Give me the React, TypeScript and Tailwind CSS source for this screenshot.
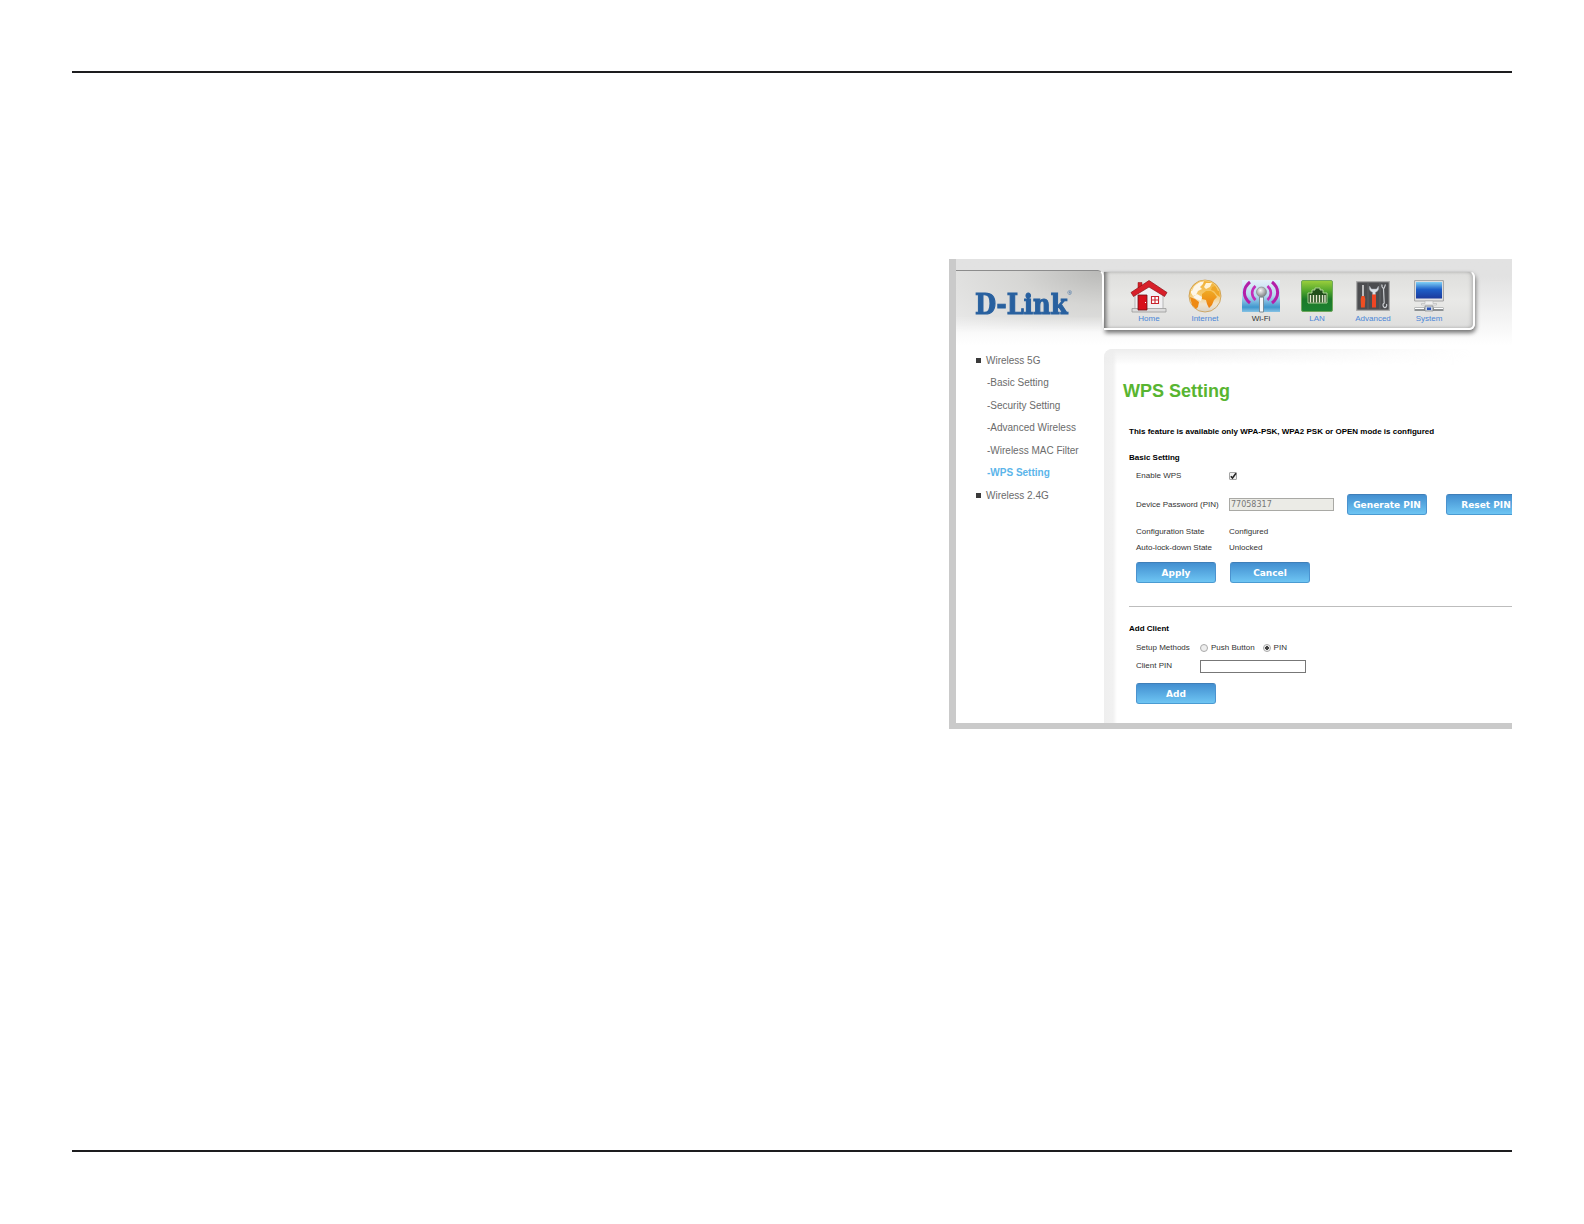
import type { ReactNode } from "react";

function HomeIcon() {
  return (
    <svg viewBox="0 0 38 34" className="h-[34px] w-[38px]" aria-hidden="true">
      <path d="M5 15 19 4 33 15V31H5Z" fill="#f1f1f3" stroke="#aaa" strokeWidth=".8" />
      <path d="M2 29.500H36V33H2Z" fill="#dcdcdc" stroke="#9a9a9a" strokeWidth=".8" />
      <path d="M8 3.500h4V9H8Z" fill="#d61f26" stroke="#8c1016" strokeWidth=".5" />
      <path d="M19 1.500 37 13.500 34.500 17.500 19 8 3.500 17.500 1 13.500Z" fill="#d8202a" stroke="#8c1219" strokeWidth=".7" />
      <path d="M8 16h9V31H8Z" fill="#d8101c" stroke="#6d1116" strokeWidth=".8" />
      <path d="M15 23.500h1" stroke="#fff" />
      <path d="M21.500 17.500h7v7h-7ZM25 17.500v7M21.500 21h7" fill="#fff" stroke="#c8232c" strokeWidth="1.100" />
    </svg>
  );
}

function GlobeIcon() {
  return (
    <svg viewBox="0 0 34 34" className="size-[34px]" aria-hidden="true">
      <defs>
        <linearGradient id="sea" x1="0" y1="0" x2="0" y2="1">
          <stop offset="0" stopColor="#f0ad2e" />
          <stop offset=".45" stopColor="#f6c96c" />
          <stop offset=".75" stopColor="#efe4d0" />
          <stop offset="1" stopColor="#d8d2c6" />
        </linearGradient>
        <linearGradient id="land" x1="0" y1="0" x2="0" y2="1">
          <stop offset="0" stopColor="#efaa24" />
          <stop offset="1" stopColor="#ee7d0c" />
        </linearGradient>
      </defs>
      <circle cx="17" cy="17" r="16" fill="url(#sea)" stroke="#c99a4c" strokeWidth=".8" />
      <path d="M6 7 11 3 16 2 15 5 12 8 14 10 10 12 8 16 5 17 3 14 3 11Z" fill="#fdf6e8" />
      <path d="M18 4 24 4 22 8 18 10 16 8Z" fill="#fff3d8" />
      <path d="M2 18 7 20 11 23 10 28 8 30 4 26Z" fill="#ee8a14" />
      <path d="M9 15 14 18 13 22 8 20 5 18Z" fill="#fbf6ec" />
      <path d="M14 15 18 12 23 12 26 14 29 18 26 21 24 26 21 29 19 25 18 21 14 20Z" fill="url(#land)" />
      <path d="M27 7 31 12 32 18 29 16 26 12 23 11 24 8Z" fill="#efa728" />
      <path d="M3.500 12A14 14 0 0 1 30.500 12" fill="none" stroke="#f9cf78" strokeWidth="1" />
    </svg>
  );
}

function WifiIcon() {
  return (
    <svg viewBox="0 0 38 34" className="h-[34px] w-[38px]" aria-hidden="true">
      <defs>
        <linearGradient id="sky" x1="0" y1="0" x2="0" y2="1">
          <stop offset="0" stopColor="#e4f0f8" />
          <stop offset=".5" stopColor="#b5d8ee" />
          <stop offset=".85" stopColor="#3f97ce" />
          <stop offset="1" stopColor="#86c2e4" />
        </linearGradient>
        <radialGradient id="ball" cx=".4" cy=".35" r=".7">
          <stop offset="0" stopColor="#f8f8f8" />
          <stop offset="1" stopColor="#75797c" />
        </radialGradient>
      </defs>
      <path d="M0 1H38V33H0Z" fill="url(#sky)" />
      <path d="M8 3C.500 9 .500 18 8 24M30 3C37.500 9 37.500 18 30 24" fill="none" stroke="#b31fa9" strokeWidth="3" />
      <path d="M13.500 7C9 11 9 17 13.500 21M25.500 7C30 11 30 17 25.500 21" fill="none" stroke="#c22eb7" strokeWidth="2.600" />
      <path d="M17.500 18h4V33h-4Z" fill="#f4f7f9" stroke="#738490" strokeWidth=".9" />
      <circle cx="19.500" cy="13" r="5" fill="url(#ball)" stroke="#7e8285" strokeWidth=".6" />
    </svg>
  );
}

function LanIcon() {
  return (
    <svg viewBox="0 0 32 32" className="size-8" aria-hidden="true">
      <defs>
        <linearGradient id="jack" x1="0" y1="0" x2="0" y2="1">
          <stop offset="0" stopColor="#9ccf3c" />
          <stop offset=".35" stopColor="#4fa52c" />
          <stop offset=".6" stopColor="#1c7a28" />
          <stop offset="1" stopColor="#1d8232" />
        </linearGradient>
      </defs>
      <rect x=".5" y=".5" width="31" height="31" rx="1.500" fill="url(#jack)" stroke="#6fa75c" />
      <path d="M7 23V13h4v-3h3V8h5v2h3v3h4V23Z" fill="#214f1b" stroke="#b9dba0" strokeWidth=".9" />
      <path d="M9.500 15v7.500M12.500 15v7.500M15.500 15v7.500M18.500 15v7.500M21.500 15v7.500M24 15v7.500" stroke="#e3e6cf" strokeWidth="1.400" />
    </svg>
  );
}

function ToolsIcon() {
  return (
    <svg viewBox="0 0 34 30" className="h-[30px] w-[34px]" aria-hidden="true">
      <rect x=".7" y=".7" width="32.600" height="28.600" fill="#4c4d50" stroke="#aaa" strokeWidth="1.200" />
      <path d="M12 1v28M24 1v28" stroke="#696a6d" strokeWidth=".7" />
      <path d="M7 4v12" stroke="#e2e2e2" strokeWidth="1.500" />
      <path d="M5.500 15h3l.8 3-.5 8.500H5L4.700 18Z" fill="#ee4e22" />
      <path d="M13.500 5c-.8 3 .5 5.500 3 6.300V14h3v-2.700c2.500-.8 3.800-3.300 3-6.300l-2 3h-5Z" fill="#dce1e6" stroke="#979ba0" strokeWidth=".5" />
      <path d="M16 13.500h4V26.500h-4Z" fill="#ee4524" />
      <path d="M26 3.500c-.5 2 0 3 1.500 4L28.200 22c-1.500 1-1.800 3 0 4.500 2 .3 3-1.500 2.300-3.500" fill="none" stroke="#c9ccd0" strokeWidth="1.200" />
      <path d="M29.500 3.500 28 7.500" stroke="#c9ccd0" strokeWidth="1.200" />
    </svg>
  );
}

function SystemIcon() {
  return (
    <svg viewBox="0 0 30 32" className="h-8 w-[30px]" aria-hidden="true">
      <defs>
        <linearGradient id="screen" x1="0" y1="0" x2="0" y2="1">
          <stop offset="0" stopColor="#7fd0f6" />
          <stop offset=".45" stopColor="#1d5fc8" />
          <stop offset="1" stopColor="#1b3a9c" />
        </linearGradient>
      </defs>
      <path d="M.6 .6H29.400V21H.6Z" fill="#e4e4e4" stroke="#a2a2a2" />
      <path d="M2 2h26V18.500h-26Z" fill="url(#screen)" />
      <path d="M11 21h8v2.500h3.500V25H7.500V23.500H11Z" fill="#f0f0f0" stroke="#b4b4b4" strokeWidth=".6" />
      <path d="M.5 27.500H29.500V31H.5Z" fill="#8d9193" />
      <path d="M1 28.500h9M20 28.500h9" stroke="#fff" strokeWidth="1.200" />
      <path d="M11 26h8v5h-8Z" fill="#cbd5e2" stroke="#777" strokeWidth=".6" />
      <path d="M13 27.500h4v2.500h-4Z" fill="#2a52b8" />
    </svg>
  );
}

const tabs: { label: string; icon: ReactNode; current?: boolean }[] = [
  { label: "Home", icon: <HomeIcon /> },
  { label: "Internet", icon: <GlobeIcon /> },
  { label: "Wi-Fi", icon: <WifiIcon />, current: true },
  { label: "LAN", icon: <LanIcon /> },
  { label: "Advanced", icon: <ToolsIcon /> },
  { label: "System", icon: <SystemIcon /> },
];

const menu: { label: string; level: 1 | 2; current?: boolean }[] = [
  { label: "Wireless 5G", level: 1 },
  { label: "-Basic Setting", level: 2 },
  { label: "-Security Setting", level: 2 },
  { label: "-Advanced Wireless", level: 2 },
  { label: "-Wireless MAC Filter", level: 2 },
  { label: "-WPS Setting", level: 2, current: true },
  { label: "Wireless 2.4G", level: 1 },
];

function ActionButton({ children }: { children: ReactNode }) {
  return (
    <button
      type="button"
      className="h-[21px] w-20 shrink-0 rounded-[3px] border border-t-[#3f7fb8] border-r-[#4b93cf] border-b-[#4a9bd2] border-l-[#4b93cf] bg-linear-to-b from-[#438fd0] to-[#6ec5f3] text-center font-['DejaVu_Sans',sans-serif] text-[9px] leading-4 font-bold whitespace-nowrap text-white"
    >
      {children}
    </button>
  );
}

function Header() {
  return (
    <header className="flex h-[86px] items-start bg-linear-to-b from-[#e2e2e2] from-20% to-white pt-[11px]">
      <a
        href="#home"
        className="flex h-[62px] w-[148px] shrink-0 items-center rounded-tr-md border-t border-r-2 border-t-[#8c8c8c] border-r-white bg-[radial-gradient(ellipse_at_top_right,#b9b9b7_0%,#d6d6d4_40%,#ebebeb_100%)] mask-[linear-gradient(to_bottom,black_75%,transparent)] pt-[6px] pl-[19px] font-['DejaVu_Serif_Condensed','DejaVu_Serif',serif] text-[27px] leading-8 font-bold whitespace-nowrap text-[#28609f] [-webkit-text-stroke:1px_#28609f]"
      >
        D-Link
        <span className="self-start font-['Liberation_Sans',sans-serif] text-[6px] font-normal [-webkit-text-stroke:0px]">®</span>
      </a>
      <nav
        aria-label="Main"
        className="mt-px flex h-[59px] w-[371px] shrink-0 rounded-r-md border-t border-r-2 border-b-2 border-t-[#cfcfcf] border-r-white border-b-white bg-linear-to-b from-[#dededc] via-[#e9e9e7] to-[#dededd] pl-[17px] shadow-[1px_3px_4px_#777,inset_4px_0_4px_-2px_#666,inset_-3px_0_4px_-2px_#aaa]"
      >
        {tabs.map((tab) => (
          <a
            key={tab.label}
            href={"#" + tab.label.toLowerCase()}
            aria-current={tab.current ? "page" : undefined}
            className={
              "flex w-14 flex-col items-center pt-[7px] text-[8px] leading-3 " +
              (tab.current ? "text-[#333]" : "text-[#4a86d8]")
            }
          >
            <span className="flex h-[34px] items-center">{tab.icon}</span>
            {tab.label}
          </a>
        ))}
      </nav>
    </header>
  );
}

function SideMenu() {
  return (
    <nav aria-label="Wi-Fi" className="w-[148px] shrink-0 pt-[4px] pl-5">
      <ul className="flex h-[157px] flex-col justify-between">
        {menu.map((item) => (
          <li
            key={item.label}
            className={"flex h-[22px] items-center text-[10px] " + (item.level === 1 ? "gap-[5px]" : "pl-[11px]")}
          >
            {item.level === 1 && <span className="size-[5px] bg-[#3a3a3a]" />}
            <a
              href={"#" + item.label}
              className={item.current ? "font-bold text-[#5bb5ea]" : "text-[#6b6b6b]"}
            >
              {item.label}
            </a>
          </li>
        ))}
      </ul>
    </nav>
  );
}

function WpsSettings() {
  return (
    <main className="relative min-w-0 flex-1 overflow-hidden pt-8 pl-[19px] text-[8px] leading-4 text-[#333]">
      <div className="absolute inset-x-0 top-[4px] bottom-0 rounded-tl-lg bg-[linear-gradient(to_right,#efefef_0,#f1f1f1_9px,white_13px)]" />
      <div className="absolute top-[4px] right-10 left-0 h-4 rounded-tl-lg bg-linear-to-b from-[#ededed] to-transparent mask-[linear-gradient(to_right,black_20%,transparent)]" />
      <form className="relative" onSubmit={(e) => e.preventDefault()}>
        <h1 className="text-[18px] leading-7 font-bold text-[#58b531]">WPS Setting</h1>
        <div className="pt-[19px] pl-[6px]">
          <p className="font-bold whitespace-nowrap text-black">
            This feature is available only WPA-PSK, WPA2 PSK or OPEN mode is configured
          </p>
          <h2 className="mt-[10px] font-bold text-black">Basic Setting</h2>
          <div className="pl-[7px]">
            <div className="mt-[2px] flex items-center">
              <label htmlFor="enable-wps" className="w-[93px] shrink-0">Enable WPS</label>
              <input
                id="enable-wps"
                type="checkbox"
                defaultChecked
                className="peer size-[8px] appearance-none rounded-[1px] border border-[#a5a5a5] bg-[#f0f0f0]"
              />
              <svg viewBox="0 0 8 8" className="pointer-events-none -ml-[8px] hidden size-[8px] overflow-visible peer-checked:block" aria-hidden="true">
                <path d="M1.800 4.200 3.500 6 7 1.200" fill="none" stroke="#222" strokeWidth="1.500" />
              </svg>
            </div>
            <div className="mt-[10px] flex items-center">
              <label htmlFor="device-pin" className="w-[93px] shrink-0">Device Password (PIN)</label>
              <input
                id="device-pin"
                type="text"
                defaultValue="77058317"
                readOnly
                className="mr-[13px] h-[13px] w-[105px] shrink-0 border border-[#a9a9a5] bg-[#ebebe6] px-px font-['DejaVu_Sans',sans-serif] text-[8px] text-[#777]"
              />
              <ActionButton>Generate PIN</ActionButton>
              <span className="w-[19px] shrink-0" />
              <ActionButton>Reset PIN</ActionButton>
            </div>
            <dl className="mt-[9px]">
              <div className="flex">
                <dt className="w-[93px]">Configuration State</dt>
                <dd>Configured</dd>
              </div>
              <div className="flex">
                <dt className="w-[93px]">Auto-lock-down State</dt>
                <dd>Unlocked</dd>
              </div>
            </dl>
            <div className="mt-[6px] flex gap-[14px]">
              <ActionButton>Apply</ActionButton>
              <ActionButton>Cancel</ActionButton>
            </div>
          </div>
          <hr className="mt-[23px] border-[#bdbdbd]" />
          <h2 className="mt-[14px] font-bold text-black">Add Client</h2>
          <div className="pl-[7px]">
            <fieldset className="mt-[3px] flex items-center">
              <span id="setup-methods" className="w-16 shrink-0">Setup Methods</span>
              <div role="radiogroup" aria-labelledby="setup-methods" className="flex gap-[8px]">
                <label className="flex items-center gap-[3px]">
                  <input
                    type="radio"
                    name="method"
                    className="size-[8px] appearance-none rounded-full border border-[#aaa] bg-[#eee] checked:bg-[radial-gradient(circle,#444_40%,#eee_50%)]"
                  />
                  Push Button
                </label>
                <label className="flex items-center gap-[3px]">
                  <input
                    type="radio"
                    name="method"
                    defaultChecked
                    className="size-[8px] appearance-none rounded-full border border-[#aaa] bg-[#eee] checked:bg-[radial-gradient(circle,#444_40%,#eee_50%)]"
                  />
                  PIN
                </label>
              </div>
            </fieldset>
            <div className="mt-[2px] flex items-center">
              <label htmlFor="client-pin" className="w-16 shrink-0">Client PIN</label>
              <input id="client-pin" type="text" className="h-[13px] w-[106px] border border-[#777] bg-white px-px" />
            </div>
            <div className="mt-[9px] flex pb-[19px]">
              <ActionButton>Add</ActionButton>
            </div>
          </div>
        </div>
      </form>
    </main>
  );
}

export default function App() {
  return (
    <div className="flex min-h-screen flex-col justify-between bg-white px-[72px] pt-[71px] pb-[72px] font-['Liberation_Sans',Arial,sans-serif]">
      <div className="border-t-2 border-[#1d1d1f] pt-[186px]">
        <section className="ml-auto w-full max-w-[563px] overflow-hidden border-b-[6px] border-l-[7px] border-[#cacaca] bg-white">
          <Header />
          <div className="flex">
            <SideMenu />
            <WpsSettings />
          </div>
        </section>
      </div>
      <div className="border-t-2 border-[#1d1d1f]" />
    </div>
  );
}
